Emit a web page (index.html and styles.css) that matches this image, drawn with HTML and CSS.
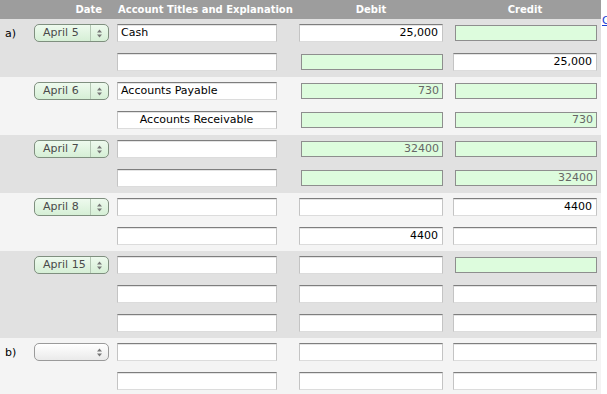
FILE: index.html
```html
<!DOCTYPE html>
<html>
<head>
<meta charset="utf-8">
<title>Journal entries</title>
<link rel="stylesheet" href="styles.css">
</head>
<body>
<div class="page">
  <div class="sheet">
    <div class="head">
      <div class="h-date">Date</div>
      <div class="h-acct">Account Titles and Explanation</div>
      <div class="h-debit">Debit</div>
      <div class="h-credit">Credit</div>
    </div>

    <div class="group dark">
      <div class="lbl">a)</div>
      <div class="sel green"><span class="sel-text">April 5</span><span class="sel-btn"><svg width="5" height="9" viewBox="0 0 5 9"><path d="M2.5 0.5L5 3.5H0z M2.5 8.5L5 5.5H0z" fill="#777"/></svg></span></div>
      <div class="fld acct">Cash</div>
      <div class="fld num">25,000</div>
      <div class="fld ro"></div>
      <div class="fld acct c3"></div>
      <div class="fld ro"></div>
      <div class="fld num">25,000</div>
    </div>

    <div class="group light">
      <div class="sel green c2"><span class="sel-text">April 6</span><span class="sel-btn"><svg width="5" height="9" viewBox="0 0 5 9"><path d="M2.5 0.5L5 3.5H0z M2.5 8.5L5 5.5H0z" fill="#777"/></svg></span></div>
      <div class="fld acct">Accounts Payable</div>
      <div class="fld ro num">730</div>
      <div class="fld ro"></div>
      <div class="fld acct c3 center">Accounts Receivable</div>
      <div class="fld ro"></div>
      <div class="fld ro num">730</div>
    </div>

    <div class="group dark">
      <div class="sel green c2"><span class="sel-text">April 7</span><span class="sel-btn"><svg width="5" height="9" viewBox="0 0 5 9"><path d="M2.5 0.5L5 3.5H0z M2.5 8.5L5 5.5H0z" fill="#777"/></svg></span></div>
      <div class="fld acct"></div>
      <div class="fld ro num">32400</div>
      <div class="fld ro"></div>
      <div class="fld acct c3"></div>
      <div class="fld ro"></div>
      <div class="fld ro num">32400</div>
    </div>

    <div class="group light">
      <div class="sel green c2"><span class="sel-text">April 8</span><span class="sel-btn"><svg width="5" height="9" viewBox="0 0 5 9"><path d="M2.5 0.5L5 3.5H0z M2.5 8.5L5 5.5H0z" fill="#777"/></svg></span></div>
      <div class="fld acct"></div>
      <div class="fld"></div>
      <div class="fld num">4400</div>
      <div class="fld acct c3"></div>
      <div class="fld num">4400</div>
      <div class="fld"></div>
    </div>

    <div class="group dark">
      <div class="sel green c2"><span class="sel-text">April 15</span><span class="sel-btn"><svg width="5" height="9" viewBox="0 0 5 9"><path d="M2.5 0.5L5 3.5H0z M2.5 8.5L5 5.5H0z" fill="#777"/></svg></span></div>
      <div class="fld acct"></div>
      <div class="fld"></div>
      <div class="fld ro"></div>
      <div class="fld acct c3"></div>
      <div class="fld"></div>
      <div class="fld"></div>
      <div class="fld acct c3"></div>
      <div class="fld"></div>
      <div class="fld"></div>
    </div>

    <div class="group light">
      <div class="lbl">b)</div>
      <div class="sel plain"><span class="sel-text"></span><span class="sel-btn nosep"><svg width="5" height="9" viewBox="0 0 5 9"><path d="M2.5 0.5L5 3.5H0z M2.5 8.5L5 5.5H0z" fill="#777"/></svg></span></div>
      <div class="fld acct"></div>
      <div class="fld"></div>
      <div class="fld"></div>
      <div class="fld acct c3"></div>
      <div class="fld"></div>
      <div class="fld"></div>
    </div>
  </div>
  <a class="link" href="#">C</a>
</div>
</body>
</html>
```

FILE: styles.css
```css
html, body {
  margin: 0;
  padding: 0;
  background: #ffffff;
  overflow: hidden;
}

.page {
  display: flex;
  align-items: flex-start;
  font-family: "DejaVu Sans", Verdana, sans-serif;
  font-size: 11px;
}

.sheet {
  width: 601px;
  flex: none;
}

.head {
  display: grid;
  grid-template-columns: 117px 182px 154px 148px;
  height: 19px;
  background: #9d9d9d;
  color: #ffffff;
  font-weight: bold;
  font-size: 10px;
  line-height: 19px;
}

.h-date {
  text-align: right;
  padding-right: 15px;
}

.h-acct {
  padding-left: 1px;
  white-space: nowrap;
}

.h-debit {
  text-align: center;
  padding-right: 10px;
}

.h-credit {
  text-align: center;
  padding-right: 4px;
}

.group {
  display: grid;
  grid-template-columns: 34px 83px 182px 154px 148px;
  grid-auto-rows: 29px;
  align-items: start;
  justify-items: start;
}

.dark {
  background: #e1e1e1;
}

.light {
  background: #f4f4f4;
}

.lbl {
  padding: 0 0 0 5px;
  line-height: 18px;
  margin-top: 6px;
  color: #000;
}

.c2 {
  grid-column: 2;
}

.c3 {
  grid-column: 3;
}

.sel {
  box-sizing: border-box;
  width: 75px;
  height: 18px;
  margin-top: 5px;
  border-radius: 5px;
  display: flex;
  align-items: stretch;
  color: #4a4a4a;
}

.sel.green {
  border: 1px solid #7f8f7f;
  background: linear-gradient(#eefaee, #d6efd6);
}

.sel.plain {
  border: 1px solid #9a9a9a;
  background: linear-gradient(#ffffff, #eaeaea);
}

.sel-text {
  flex: 1;
  padding-left: 8px;
  line-height: 16px;
  white-space: nowrap;
  overflow: hidden;
}

.sel-btn {
  width: 17px;
  border-left: 1px solid #b3c6b3;
  display: flex;
  align-items: center;
  justify-content: center;
}

.sel-btn.nosep {
  border-left: none;
}

.fld {
  box-sizing: border-box;
  width: 144px;
  height: 18px;
  margin-top: 5px;
  background: #ffffff;
  border: 1px solid;
  border-color: #7e7e7e #c4c4c4 #dcdcdc #c4c4c4;
  box-shadow: inset 0 1px 0 #e4e4e4;
  padding: 0 4px 0 3px;
  line-height: 16px;
  color: #000;
  white-space: nowrap;
  overflow: hidden;
}

.fld.acct {
  width: 160px;
}

.num {
  text-align: right;
}

.center {
  text-align: center;
}

.fld.ro {
  width: 142px;
  height: 16px;
  margin-top: 6px;
  margin-left: 2px;
  background: #ddfcdd;
  border: 1px solid #8e8e8e;
  box-shadow: none;
  color: #666;
  line-height: 14px;
  padding-right: 3px;
}

.link {
  margin-top: 14px;
  margin-left: 1px;
  color: #1a3fd6;
  text-decoration: underline;
  font-family: "DejaVu Sans", Verdana, sans-serif;
  font-size: 11px;
}
```
